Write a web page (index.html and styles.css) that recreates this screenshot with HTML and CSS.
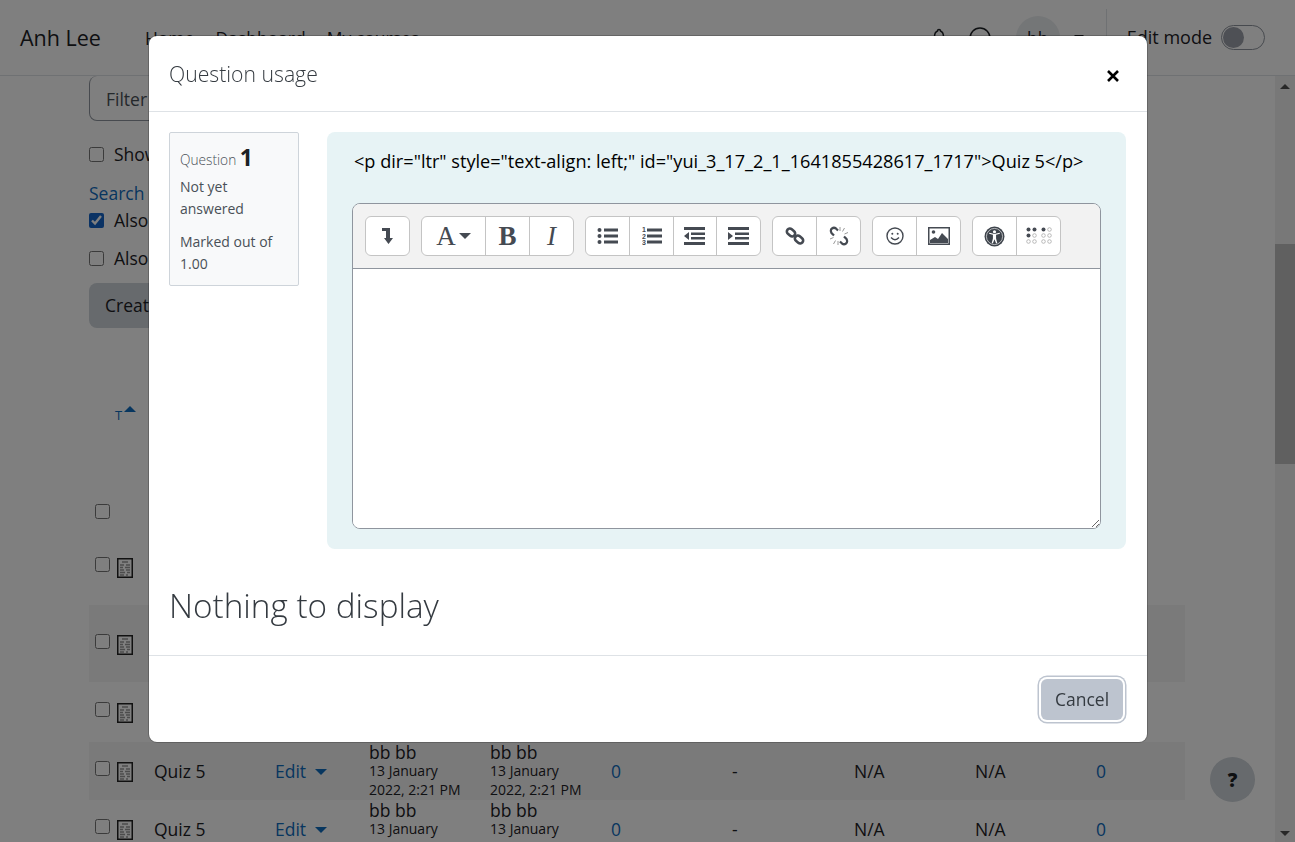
FILE: index.html
```html
<!DOCTYPE html>
<html>

<head>
  <meta charset="utf-8">
  <title>Question usage</title>
  <link rel="stylesheet" href="styles.css">
</head>

<body>

  <nav class="navbar">
    <a class="brand">Anh Lee</a>
    <a class="nav-link">Home</a>
    <a class="nav-link">Dashboard</a>
    <a class="nav-link">My courses</a>
    <div class="nav-right">
      <svg class="nav-icon" width="18" height="20" viewBox="0 0 18 20"><path d="M9 1.500a1.500 1.500 0 0 1 1.500 1.500c2.500 1 3 3 3 6 0 3 1 4 2 5.500H2.500c1-1.500 2-2.500 2-5.500 0-3 .5-5 3-6A1.500 1.500 0 0 1 9 1.500z" fill="none" stroke="#1d2125" stroke-width="1.500"/></svg>
      <svg class="nav-icon chat" width="24" height="24" viewBox="0 0 24 24"><circle cx="12" cy="12" r="10" fill="none" stroke="#1d2125" stroke-width="1.500"/></svg>
      <div class="avatar">bb</div>
      <span class="caret"></span>
      <div class="nav-divider"></div>
      <span class="edit-label">Edit mode</span>
      <span class="toggle"><span class="knob"></span></span>
    </div>
  </nav>

  <div class="page">
    <main class="content">
      <div class="filter"><span>Filter</span></div>
      <label class="check-line show"><input type="checkbox"> Show</label>
      <a class="search-link">Search</a>
      <label class="check-line also"><input type="checkbox" checked> Also</label>
      <label class="check-line also2"><input type="checkbox"> Also</label>
      <div class="create-btn">Create</div>

      <div class="sort-head">T<span class="sort-up"></span></div>
      <div class="row row-head"><input type="checkbox"></div>

      <div class="row row-first">
        <div class="cell-check"><input type="checkbox"><svg class="doc" viewBox="0 0 16 20"><use href="#doc"/></svg></div>
        <div>Quiz 5</div>
      </div>
      <div class="row row-tall striped">
        <div class="cell-check"><input type="checkbox"><svg class="doc" viewBox="0 0 16 20"><use href="#doc"/></svg></div>
        <div>Quiz 5</div>
      </div>
      <div class="row row-mid">
        <div class="cell-check"><input type="checkbox"><svg class="doc" viewBox="0 0 16 20"><use href="#doc"/></svg></div>
        <div>Quiz 5</div>
      </div>
      <div class="row striped">
        <div class="cell-check"><input type="checkbox"><svg class="doc" viewBox="0 0 16 20"><use href="#doc"/></svg></div>
        <div>Quiz 5</div>
        <div><a class="link">Edit</a><span class="edit-caret"></span></div>
        <div class="who">bb bb<small>13 January 2022, 2:21 PM</small></div>
        <div class="who">bb bb<small>13 January 2022, 2:21 PM</small></div>
        <div><a class="link">0</a></div>
        <div>-</div>
        <div>N/A</div>
        <div>N/A</div>
        <div><a class="link">0</a></div>
      </div>
      <div class="row">
        <div class="cell-check"><input type="checkbox"><svg class="doc" viewBox="0 0 16 20"><use href="#doc"/></svg></div>
        <div>Quiz 5</div>
        <div><a class="link">Edit</a><span class="edit-caret"></span></div>
        <div class="who">bb bb<small>13 January 2022, 2:21 PM</small></div>
        <div class="who">bb bb<small>13 January 2022, 2:21 PM</small></div>
        <div><a class="link">0</a></div>
        <div>-</div>
        <div>N/A</div>
        <div>N/A</div>
        <div><a class="link">0</a></div>
      </div>
    </main>
    <div class="scrollbar">
      <span class="arrow-up"></span>
      <span class="thumb"></span>
      <span class="arrow-down"></span>
    </div>
  </div>

  <div class="help-btn">?</div>

  <svg class="defs" width="0" height="0">
    <symbol id="doc" viewBox="0 0 16 20">
      <rect x=".75" y=".75" width="14.500" height="18.500" fill="#fff" stroke="#222" stroke-width="1.500"/>
      <path d="M5 4h6M3 7h4M9 7h4M3 9.500h3M8 9.500h5M3 12h4M9 12h4M3 14.500h5M10 14.500h3M3 17h4M9 17h2" stroke="#999" stroke-width="1.300"/>
    </symbol>
  </svg>

  <div class="backdrop"></div>

  <div class="modal">
    <header class="modal-header">
      <h5>Question usage</h5>
      <svg class="close" width="14" height="14" viewBox="0 0 14 14"><path d="M2 2l10 10M12 2L2 12" stroke="#000" stroke-width="2.600"/></svg>
    </header>

    <div class="modal-body">
      <div class="question">
        <div class="info">
          <div class="qno">Question <b>1</b></div>
          <div class="state">Not yet answered</div>
          <div class="grade">Marked out of 1.00</div>
        </div>
        <div class="formulation">
          <p class="qtext">&lt;p dir="ltr" style="text-align: left;" id="yui_3_17_2_1_1641855428617_1717"&gt;Quiz 5&lt;/p&gt;</p>
          <div class="editor">
            <div class="toolbar">
              <div class="group">
                <span class="tb">
                  <svg width="16" height="16" viewBox="0 0 16 16"><path d="M2 0h8v10h3l-4.500 6L4 10h2V3H2z"/></svg>
                </span>
              </div>
              <div class="group">
                <span class="tb tb-wide"><span class="glyph glyph-a">A</span><span class="tb-caret"></span></span>
                <span class="tb"><span class="glyph glyph-b">B</span></span>
                <span class="tb"><span class="glyph glyph-i">I</span></span>
              </div>
              <div class="group">
                <span class="tb">
                  <svg width="22" height="18" viewBox="0 0 22 18"><circle cx="2.500" cy="3" r="2"/><circle cx="2.500" cy="9" r="2"/><circle cx="2.500" cy="15" r="2"/><path d="M7 1.500h14v3H7zM7 7.500h14v3H7zM7 13.500h14v3H7z"/></svg>
                </span>
                <span class="tb">
                  <svg width="20" height="20" viewBox="0 0 20 20"><text class="nums" x="0" y="6">1</text><text class="nums" x="0" y="12.500">2</text><text class="nums" x="0" y="19">3</text><path d="M5 2.500h15v3H5zM5 8.500h15v3H5zM5 14.500h15v3H5z"/></svg>
                </span>
                <span class="tb tb-narrow">
                  <svg width="22" height="18" viewBox="0 0 22 18"><path d="M0 0h21v3H0zM0 15h21v3H0zM7 5.500h14v2.500H7zM7 10h14v2.500H7zM5 5v8L0 9z"/></svg>
                </span>
                <span class="tb">
                  <svg width="22" height="18" viewBox="0 0 22 18"><path d="M0 0h21v3H0zM0 15h21v3H0zM7 5.500h14v2.500H7zM7 10h14v2.500H7zM0 5v8l5-4z"/></svg>
                </span>
              </div>
              <div class="group">
                <span class="tb">
                  <svg width="20" height="20" viewBox="0 0 20 20" fill="none" stroke="#454a52" stroke-width="2.600"><rect x="1.500" y="3.500" width="9" height="6" rx="3" transform="rotate(40 6 6.500)"/><rect x="9.500" y="10.500" width="9" height="6" rx="3" transform="rotate(40 14 13.500)"/></svg>
                </span>
                <span class="tb">
                  <svg width="20" height="20" viewBox="0 0 20 20" fill="none" stroke="#454a52" stroke-width="2.200"><path d="M9 4.500L7 2.500Q5 1 3 2.500T2.500 7L5 9.500M11 15.500l2 2q2 1.500 4 0t.5-4.500L15 10.500"/><path d="M11 1v4M15.500 2l-2 3.500M19 6.500L15.500 8M1 13l3.500-1.500M4.500 18l2-3.500M9 19v-4" stroke="#999" stroke-width="1"/></svg>
                </span>
              </div>
              <div class="group">
                <span class="tb">
                  <svg width="18" height="18" viewBox="0 0 18 18" fill="none" stroke="#454a52" stroke-width="1.400"><circle cx="9" cy="9" r="8"/><path d="M5 10.500q4 4.500 8 0"/><circle cx="6.300" cy="6.800" r="1" fill="#454a52" stroke="none"/><circle cx="11.700" cy="6.800" r="1" fill="#454a52" stroke="none"/></svg>
                </span>
                <span class="tb">
                  <svg width="22" height="18" viewBox="0 0 22 18"><rect x=".75" y=".75" width="20.500" height="16.500" fill="#fff" stroke="#454a52" stroke-width="1.500"/><path d="M2 16v-3l5-3 3 2 4-6 6 6v4z"/><circle cx="5.500" cy="5" r="1.800"/></svg>
                </span>
              </div>
              <div class="group">
                <span class="tb">
                  <svg width="21" height="21" viewBox="0 0 20 20"><circle cx="10" cy="10" r="9.500" fill="#3d434b"/><circle cx="10" cy="10" r="7.700" fill="none" stroke="#fff" stroke-width=".6"/><circle cx="10" cy="5.500" r="1.500" fill="#fff"/><path d="M4.800 7.300l3.700 1V12l-1.200 4.500h1.200L10 12.500l1.500 4h1.200L11.500 12V8.300l3.700-1-.3-.8-4.900 1-4.900-1z" fill="#fff"/></svg>
                </span>
                <span class="tb">
                  <svg width="26" height="18" viewBox="0 0 26 18"><g fill="#454a52"><circle cx="2.500" cy="2.500" r="2"/><circle cx="8.500" cy="2.500" r="2"/><circle cx="2.500" cy="8.500" r="2"/><circle cx="17.500" cy="2.500" r="2"/></g><g fill="none" stroke="#aaa" stroke-width=".8"><circle cx="8.500" cy="8.500" r="1.800"/><circle cx="2.500" cy="14.500" r="1.800"/><circle cx="8.500" cy="14.500" r="1.800"/><circle cx="23.500" cy="2.500" r="1.800"/><circle cx="17.500" cy="8.500" r="1.800"/><circle cx="23.500" cy="8.500" r="1.800"/><circle cx="17.500" cy="14.500" r="1.800"/><circle cx="23.500" cy="14.500" r="1.800"/></g></svg>
                </span>
              </div>
            </div>
            <textarea class="editor-area"></textarea>
          </div>
        </div>
      </div>
      <h2 class="empty">Nothing to display</h2>
    </div>

    <footer class="modal-footer">
      <button class="cancel">Cancel</button>
    </footer>
  </div>

</body>

</html>
```

FILE: styles.css
```css
* {
  box-sizing: border-box;
}

html, body {
  height: 100%;
}

body {
  margin: 0;
  overflow: hidden;
  background: #fff;
  color: #1d2125;
  font-family: "Open Sans", "Noto Sans", sans-serif;
  font-size: 17.500px;
}

.defs {
  position: absolute;
}

/* page behind the dialog */
.navbar {
  display: flex;
  align-items: center;
  height: 76px;
  padding: 0 30px 0 20px;
  border-bottom: 1px solid #dee2e6;
}

.brand {
  font-size: 21.500px;
  margin-right: 44px;
}

.nav-link {
  margin-right: 21px;
}

.nav-right {
  display: flex;
  align-items: center;
  margin-left: auto;
}

.nav-icon {
  margin-right: 20px;
}

.chat {
  margin-right: 24px;
}

.avatar {
  width: 44px;
  height: 44px;
  border-radius: 50%;
  background: #e9ecef;
  text-align: center;
  line-height: 44px;
  margin-right: 14px;
}

.caret {
  border: solid transparent;
  border-width: 5px 5px 0;
  border-top-color: #1d2125;
}

.nav-divider {
  width: 1px;
  height: 58px;
  background: #dee2e6;
  margin: 0 20px 0 22px;
}

.edit-label {
  font-size: 18px;
  margin: -1px 9px 0 0;
}

.toggle {
  display: block;
  width: 44px;
  height: 25px;
  border: 1px solid #8f959e;
  border-radius: 13px;
  padding: 1px;
}

.knob {
  display: block;
  width: 21px;
  height: 21px;
  border-radius: 50%;
  background: #9ca0aa;
}

.page {
  display: flex;
  height: 766px;
}

.content {
  flex: 1;
  padding: 0 90px 0 89px;
  overflow: hidden;
}

.filter {
  height: 45px;
  width: 300px;
  border: 1px solid #8f959e;
  border-top: 0;
  border-radius: 8px;
  padding: 11px 16px;
  color: #495057;
}

.check-line {
  display: flex;
  align-items: center;
  gap: 10px;
  height: 24px;
}

input[type="checkbox"] {
  width: 15px;
  height: 15px;
  margin: 0;
  accent-color: #1565c8;
}

.check-line input {
  margin-left: 0;
}

.show {
  margin-top: 21px;
}

.search-link {
  display: block;
  color: #0f6cbf;
  height: 24px;
  margin-top: 15px;
}

.also {
  margin-top: 3px;
}

.also2 {
  margin-top: 14px;
}

.create-btn {
  width: 200px;
  height: 45px;
  margin-top: 13px;
  padding: 10px 16px;
  border-radius: 8px;
  background: #ced4da;
}

.sort-head {
  margin-top: 78px;
  padding-left: 26px;
  height: 20px;
  color: #0f6cbf;
  font-size: 13px;
}

.sort-up {
  display: inline-block;
  vertical-align: 8px;
  margin-left: 2px;
  border: solid transparent;
  border-width: 0 6px 6px;
  border-bottom-color: #0f6cbf;
}

.row {
  display: grid;
  grid-template-columns: 65px 121px 94px 121px 121px 121px 122px 121px 121px 1fr;
  align-items: center;
  height: 58px;
}

.row-head {
  display: flex;
  height: 35px;
  margin-top: 68px;
  padding-left: 6px;
}

.row-first {
  height: 76px;
}

.row-tall {
  height: 77px;
}

.row-mid {
  height: 60px;
}

.striped {
  background: #f5f5f5;
}

.cell-check {
  display: flex;
  align-items: center;
  gap: 7px;
  padding-left: 6px;
}

.cell-check input {
  margin-top: -5px;
}

.doc {
  width: 16px;
  height: 20px;
  margin-top: 2px;
}

.link {
  color: #0f6cbf;
}

.edit-caret {
  display: inline-block;
  margin-left: 9px;
  vertical-align: 3px;
  border: solid transparent;
  border-width: 6px 6px 0;
  border-top-color: #0f6cbf;
}

.who {
  line-height: 18px;
  width: 100px;
}

.who small {
  display: block;
  font-size: 14px;
  line-height: 19.500px;
}

.scrollbar {
  display: flex;
  flex-direction: column;
  align-items: center;
  width: 20px;
  margin-left: auto;
  background: #f1f1f1;
  padding: 8px 0 6px;
}

.arrow-up, .arrow-down {
  border: solid transparent;
  border-width: 0 5px 5px;
  border-bottom-color: #505050;
}

.arrow-down {
  border-width: 5px 5px 0;
  border-top-color: #505050;
  margin-top: auto;
}

.thumb {
  width: 20px;
  height: 220px;
  margin-top: 155px;
  background: #c1c1c1;
}

.help-btn {
  position: fixed;
  left: 1210px;
  top: 757px;
  width: 45px;
  height: 45px;
  border-radius: 50%;
  background: #ced4da;
  text-align: center;
  line-height: 47px;
  font-size: 19px;
  font-weight: 800;
}

/* dialog */
.backdrop {
  position: fixed;
  inset: 0;
  background: rgba(0, 0, 0, .5);
}

.modal {
  position: fixed;
  left: 149px;
  top: 36px;
  width: 998px;
  height: 706px;
  display: flex;
  flex-direction: column;
  background: #fff;
  border-radius: 8px;
  box-shadow: 0 0 0 1px rgba(0, 0, 0, .2);
}

.modal-header {
  display: flex;
  align-items: center;
  justify-content: space-between;
  height: 76px;
  padding: 0 27px 0 20px;
  border-bottom: 1px solid #dee2e6;
}

.modal-header h5 {
  margin: 0 0 1px;
  font-size: 21.200px;
  font-weight: 300;
  color: #343a40;
}

.close {
  margin-top: 4px;
}

.modal-body {
  flex: 1;
  padding: 20px 21px 0 20px;
}

.question {
  display: flex;
  align-items: flex-start;
  gap: 28px;
}

.info {
  width: 130px;
  height: 154px;
  padding: 8px 10px;
  background: #f8f9fa;
  border: 1px solid #ced4da;
  border-radius: 2px;
  font-size: 14px;
  line-height: 22px;
  color: #495057;
}

.qno {
  font-size: 13.700px;
  font-weight: 300;
  line-height: 33px;
}

.qno b {
  font-size: 23px;
  font-weight: 700;
  color: #1d2125;
  vertical-align: -1px;
}

.grade {
  margin-top: 11px;
}

.formulation {
  flex: 1;
  height: 417px;
  padding: 16px 25px 20px;
  background: #e7f3f5;
  border-radius: 8px;
}

.qtext {
  margin: 0 0 29px 2px;
  font-size: 18.150px;
  line-height: 26px;
  color: #000;
  white-space: nowrap;
}

.editor {
  height: 326px;
  display: flex;
  flex-direction: column;
  border: 1px solid #8f959e;
  border-radius: 8px;
  overflow: hidden;
  background: #fff;
}

.toolbar {
  display: flex;
  gap: 11px;
  height: 65px;
  padding: 12px;
  background: #f2f2f2;
  border-bottom: 1px solid #8f959e;
}

.group {
  display: flex;
  height: 40px;
  background: #fff;
  border: 1px solid #c4c4c4;
  border-radius: 6px;
}

.tb {
  display: flex;
  align-items: center;
  justify-content: center;
  width: 43px;
  fill: #454a52;
  color: #454a52;
}

.tb + .tb {
  width: 44px;
  border-left: 1px solid #c4c4c4;
}

.tb + .tb-narrow {
  width: 43px;
}

.tb-wide {
  width: 63px;
  gap: 3px;
}

.glyph {
  font-family: "Liberation Serif", serif;
  font-size: 27px;
}

.glyph-b {
  font-weight: 700;
}

.glyph-i {
  font-style: italic;
}

.tb-caret {
  border: solid transparent;
  border-width: 6px 6px 0;
  border-top-color: #454a52;
}

.nums {
  font-family: "Liberation Sans", sans-serif;
  font-size: 7px;
  font-weight: 700;
}

.editor-area {
  flex: 1;
  display: block;
  width: 100%;
  border: 0;
  outline: 0;
  resize: vertical;
  background: #fff;
}

.empty {
  margin: 34px 0 0;
  font-size: 33.300px;
  font-weight: 300;
  line-height: 44px;
  color: #343a40;
}

.modal-footer {
  display: flex;
  justify-content: flex-end;
  align-items: center;
  height: 87px;
  padding: 0 24px 0 0;
  border-top: 1px solid #dee2e6;
}

.cancel {
  width: 82px;
  height: 41px;
  padding: 0;
  border: 0;
  border-radius: 6px;
  background: #bdc4cf;
  color: #343a40;
  font: inherit;
  box-shadow: 0 0 0 2px #fff, 0 0 0 3.500px #bdc4cf;
}
```
